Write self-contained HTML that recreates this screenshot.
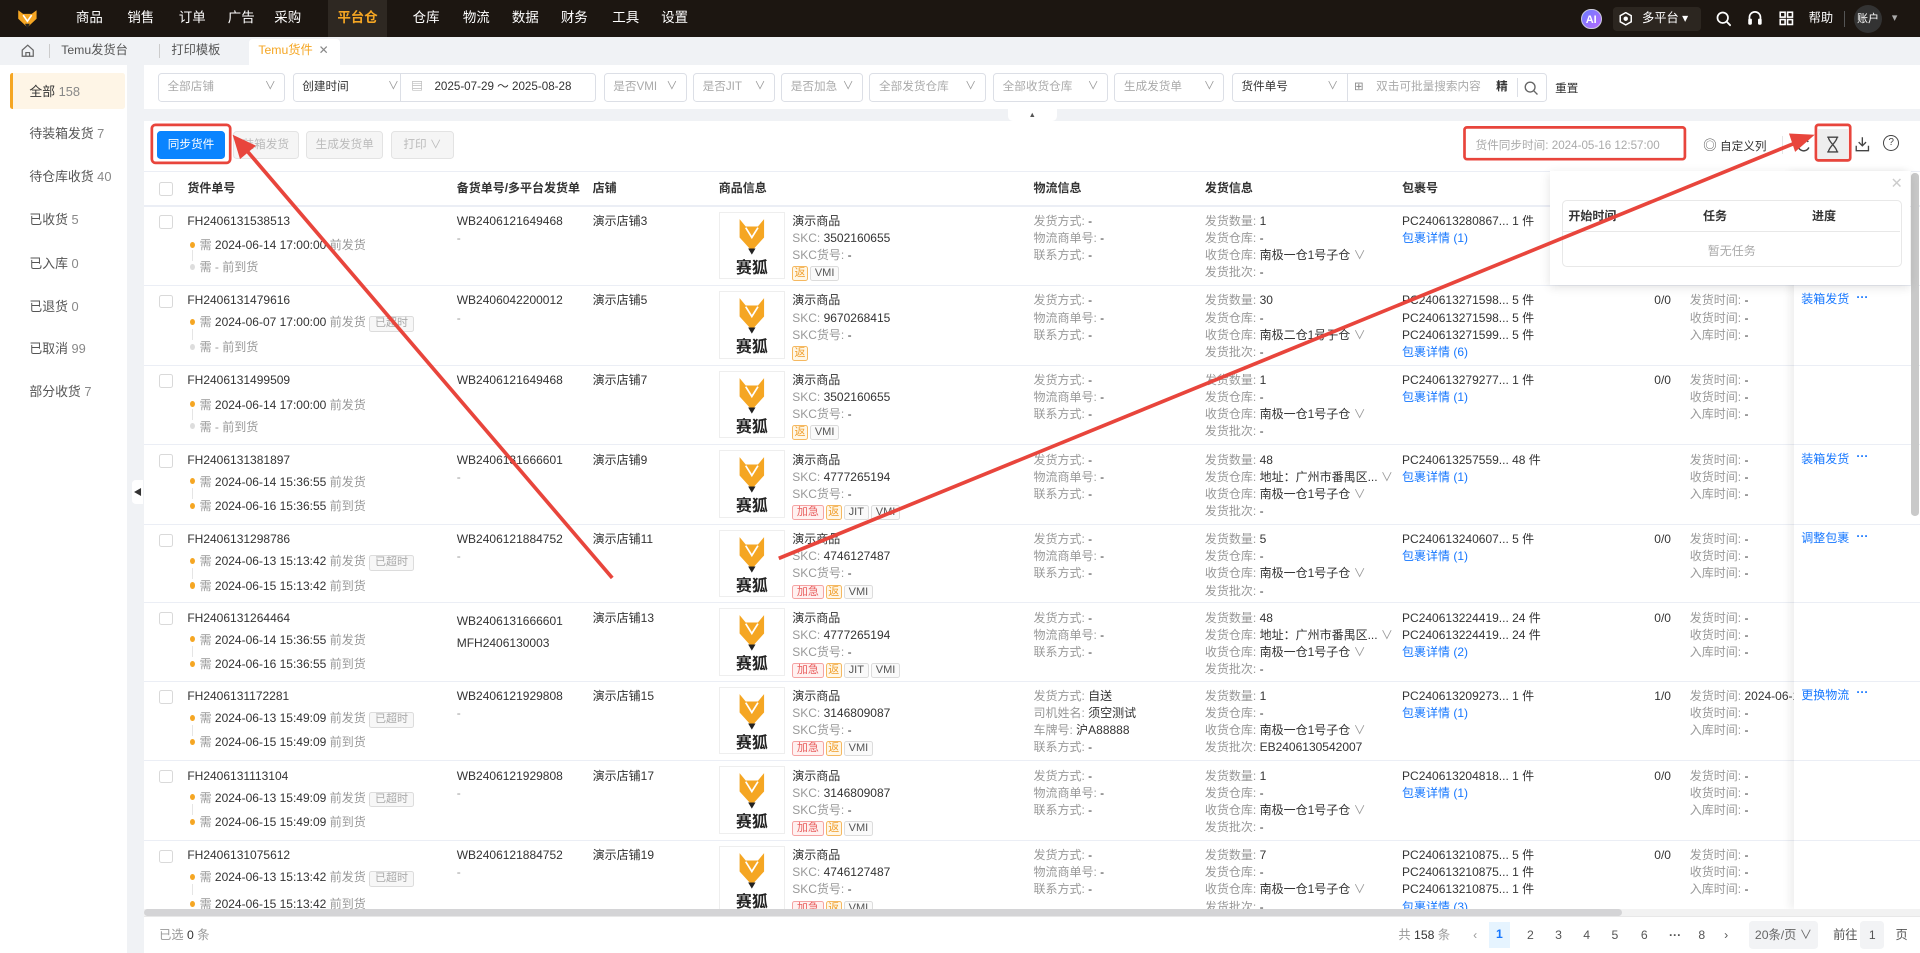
<!DOCTYPE html>
<html><head><meta charset="utf-8"><style>
*{box-sizing:border-box;margin:0;padding:0}
html,body{width:1920px;height:953px;overflow:hidden;background:#f0f2f5}
#w{zoom:1.2245;width:1568px;height:778px;position:relative;font-family:"Liberation Sans","Noto Sans CJK SC",sans-serif;font-size:9.8px;color:#333;line-height:14px}
.a{position:absolute;white-space:nowrap}
.nav{left:0;top:0;width:1568px;height:30px;background:#1c1611}
.nav .m{position:absolute;top:0;height:30px;line-height:30px;color:#fff;font-size:11px}
.tabs{left:0;top:30px;width:1568px;height:23px;background:#f0f2f5}
.side{left:0;top:53px;width:104px;height:725px;background:#fff}
.side .it{position:absolute;left:24px;color:#555;font-size:10.5px}
.side .it b{font-weight:normal;color:#888}
.fp{left:118px;top:53px;width:1450px;height:36px;background:#fff}
.sel{position:absolute;top:7px;height:23px;border:1px solid #dcdfe6;border-radius:3px;background:#fff;color:#aaa;line-height:21px;padding-left:7px;font-size:9.5px}
.sel .ar{position:absolute;right:7px;top:0;color:#999;font-size:9px}
.mp{left:118px;top:99px;width:1450px;height:679px;background:#fff}
.btn{position:absolute;top:8px;height:23px;line-height:21px;border:1px solid #e3e3e3;border-radius:3px;background:#f5f5f5;color:#bbb;text-align:center;font-size:9.5px}
.hd{left:118px;top:140px;width:1450px;height:28px;border-top:1px solid #ebeef5;border-bottom:1px solid #ebeef5;font-weight:bold;font-size:9.8px}
.row{position:absolute;left:118px;width:1450px;height:65px;border-top:1px solid #ebeef5;background:#fff}
.cb{position:absolute;width:11px;height:11px;border:1px solid #d9d9d9;border-radius:2px;background:#fff}
.g{color:#999}
.dot{display:inline-block;width:4px;height:5px;border-radius:50%;background:#f5a623;margin-right:4px;vertical-align:1px}
.dot.n{background:#ddd}
.tg{display:inline-block;height:12px;line-height:10px;border:1px solid #dcdcdc;border-radius:2px;padding:0 3px;font-size:9px;color:#555;margin-right:2px;background:#fafafa}
.tg.o{border-color:#f5b860;color:#f0a030;background:#fff7e6;padding:0 1px}
.tg.r{border-color:#f5a3a3;color:#e86060;background:#fff1f0}
.tg.to{color:#aaa;background:#f7f7f7;height:13px;line-height:11px;padding:0 4px}
.img{position:absolute;left:469px;top:4px;width:54px;height:55px;border:1px solid #eee;background:#fff}
.bl{color:#1677ff}
.fx{position:absolute;left:1465px;top:140px;width:96px;height:602px;background:#fff;box-shadow:-4px 0 6px rgba(0,0,0,.06)}
.pg{position:absolute;top:756px;height:16px;line-height:16px;font-size:10px;color:#555}
</style></head><body><div id="w">

<div class="a nav">
<svg class="a" style="left:14px;top:7px" width="17" height="17" viewBox="0 0 17 17"><polygon points="1,1 5,4 12,4 16,1 16,8 8.5,15 1,8" fill="#f5a623"/><polyline points="5,5 8.5,10 12,5" fill="none" stroke="#fff" stroke-width="1.3"/><polygon points="6.5,12 10.5,12 8.5,16" fill="#222"/></svg>
<div class="m" style="left:62px">商品</div><div class="m" style="left:104px">销售</div><div class="m" style="left:146px">订单</div><div class="m" style="left:186px">广告</div><div class="m" style="left:224px">采购</div>
<div class="m" style="width:48px;text-align:center;background:#2e2822;color:#f5a623;font-weight:bold;left:268px">平台仓</div>
<div class="m" style="left:337px">仓库</div><div class="m" style="left:378px">物流</div><div class="m" style="left:418px">数据</div><div class="m" style="left:458px">财务</div><div class="m" style="left:500px">工具</div><div class="m" style="left:540px">设置</div>
<div class="a" style="left:1291px;top:7px;width:17px;height:17px;border-radius:50%;background:linear-gradient(135deg,#6b7cff,#b86bff);color:#fff;font-size:9px;font-weight:bold;line-height:17px;text-align:center;border:1px solid #ccd">AI</div>
<div class="a" style="left:1317px;top:6px;width:72px;height:19px;background:#2c2620;border-radius:3px;color:#fff;font-size:10px;line-height:19px;padding-left:24px">多平台 ▾</div>
<svg class="a" style="left:1322px;top:10px" width="11" height="11" viewBox="0 0 11 11"><polygon points="5.5,0.5 10,3 10,8 5.5,10.5 1,8 1,3" fill="none" stroke="#fff" stroke-width="1.2"/><circle cx="5.5" cy="5.5" r="1.8" fill="#fff"/></svg>
<svg class="a" style="left:1401px;top:9px" width="13" height="13" viewBox="0 0 13 13"><circle cx="5.5" cy="5.5" r="4.3" fill="none" stroke="#fff" stroke-width="1.4"/><line x1="8.6" y1="8.6" x2="12" y2="12" stroke="#fff" stroke-width="1.5"/></svg>
<svg class="a" style="left:1427px;top:8px" width="13" height="14" viewBox="0 0 13 14"><path d="M2 8 V6 A4.5 4.5 0 0 1 11 6 V8" fill="none" stroke="#fff" stroke-width="1.4"/><rect x="1" y="7" width="3" height="5" rx="1" fill="#fff"/><rect x="9" y="7" width="3" height="5" rx="1" fill="#fff"/></svg>
<svg class="a" style="left:1453px;top:9px" width="12" height="12" viewBox="0 0 12 12" fill="none" stroke="#fff" stroke-width="1.3"><rect x="1" y="1" width="4" height="4"/><rect x="7" y="1" width="4" height="4"/><rect x="1" y="7" width="4" height="4"/><rect x="7" y="7" width="4" height="4"/></svg>
<div class="m" style="left:1477px;font-size:10px">帮助</div>
<div class="a" style="left:1506px;top:9px;width:1px;height:13px;background:#555"></div>
<div class="a" style="left:1514px;top:4px;width:23px;height:23px;border-radius:50%;background:#333;color:#fff;font-size:9px;line-height:23px;text-align:center">账户</div>
<div class="m" style="left:1545px;color:#aaa;font-size:9px">▾</div>
</div>

<div class="a tabs">
<svg class="a" style="left:17px;top:6px" width="11" height="11" viewBox="0 0 11 11"><path d="M1 5 L5.5 1 L10 5 V10 H1 Z M4 10 V7 H7 V10" fill="none" stroke="#666" stroke-width="1"/></svg>
<div class="a" style="left:40px;top:6px;width:1px;height:11px;background:#ccc"></div>
<div class="a" style="left:50px;top:4px;color:#555;font-size:10px">Temu发货台</div>
<div class="a" style="left:130px;top:6px;width:1px;height:11px;background:#ccc"></div>
<div class="a" style="left:140px;top:4px;color:#555;font-size:10px">打印模板</div>
<div class="a" style="left:203px;top:2px;width:75px;height:21px;background:#fff;border-radius:3px 3px 0 0"></div>
<div class="a" style="left:211px;top:4px;color:#f5a623;font-size:10px">Temu货件 <span style="color:#888;margin-left:2px">✕</span></div>
</div>

<div class="a side">
<div class="a" style="left:8px;top:7px;width:94px;height:29px;background:#fef5e6;border-left:3px solid #f5a623;border-radius:2px"></div>
<div class="it" style="top:15px;color:#333">全部 <b>158</b></div>
<div class="it" style="top:49px">待装箱发货 <b>7</b></div>
<div class="it" style="top:84px">待仓库收货 <b>40</b></div>
<div class="it" style="top:119px">已收货 <b>5</b></div>
<div class="it" style="top:155px">已入库 <b>0</b></div>
<div class="it" style="top:190px">已退货 <b>0</b></div>
<div class="it" style="top:225px">已取消 <b>99</b></div>
<div class="it" style="top:260px">部分收货 <b>7</b></div>
</div>
<div class="a" style="left:108px;top:392px;width:9px;height:20px;background:#fff;border-radius:3px 0 0 3px;color:#333;font-size:7px;line-height:20px;text-align:center">◀</div>

<div class="a fp">
<div class="sel" style="left:11px;width:104px">全部店铺<span class="ar">∨</span></div>
<div class="sel" style="left:121px;width:248px;color:#333">创建时间<span class="ar" style="right:auto;left:77px">∨</span><span style="position:absolute;left:87px;top:0;bottom:0;border-left:1px solid #dcdfe6"></span><span style="position:absolute;left:96px;color:#999">▤</span><span style="position:absolute;left:115px;color:#333">2025-07-29 ～ 2025-08-28</span></div>
<div class="sel" style="left:375px;width:68px">是否VMI<span class="ar">∨</span></div>
<div class="sel" style="left:448px;width:67px">是否JIT<span class="ar">∨</span></div>
<div class="sel" style="left:520px;width:67px">是否加急<span class="ar">∨</span></div>
<div class="sel" style="left:592px;width:95px">全部发货仓库<span class="ar">∨</span></div>
<div class="sel" style="left:693px;width:94px">全部收货仓库<span class="ar">∨</span></div>
<div class="sel" style="left:792px;width:90px">生成发货单<span class="ar">∨</span></div>
<div class="sel" style="left:888px;width:257px;color:#333">货件单号<span class="ar" style="right:auto;left:77px">∨</span><span style="position:absolute;left:93px;top:0;bottom:0;border-left:1px solid #dcdfe6"></span><span style="position:absolute;left:99px;color:#888">⊞</span><span style="position:absolute;left:117px;color:#aaa">双击可批量搜索内容</span><span style="position:absolute;left:215px;color:#333;font-weight:bold">精</span><span style="position:absolute;left:232px;top:3px;bottom:3px;border-left:1px solid #dcdfe6"></span><svg style="position:absolute;left:238px;top:5px" width="12" height="12" viewBox="0 0 12 12"><circle cx="5" cy="5" r="4" fill="none" stroke="#666" stroke-width="1.1"/><line x1="8" y1="8" x2="11" y2="11" stroke="#666" stroke-width="1.1"/></svg></div>
<div class="a" style="left:1152px;top:12px;font-size:9.5px">重置</div>
</div>
<div class="a" style="left:823px;top:89px;width:40px;height:10px;background:#fff;border-radius:0 0 4px 4px;text-align:center;font-size:6px;line-height:10px;color:#555">▲</div>

<div class="a mp">
<div class="btn" style="left:10px;width:56px;background:#0a84ff;border-color:#0a84ff;color:#fff">同步货件</div>
<div class="btn" style="left:72px;width:54px">装箱发货</div>
<div class="btn" style="left:132px;width:63px">生成发货单</div>
<div class="btn" style="left:201px;width:52px">打印 ∨</div>
<div class="a" style="left:1087px;top:13px;color:#aaa;font-size:9.5px">货件同步时间: 2024-05-16 12:57:00</div>
<div class="a" style="left:1273px;top:13px;font-size:9.5px"><span style="color:#555;font-size:11px">◎</span> 自定义列</div>
<div class="a" style="left:1337px;top:12px;width:1px;height:15px;background:#e5e5e5"></div>
<svg class="a" style="left:1349px;top:13px" width="12" height="13" viewBox="0 0 12 13"><path d="M10 4 A4.6 4.6 0 1 0 10.5 8.5" fill="none" stroke="#444" stroke-width="1.2"/></svg>
<div class="a" style="left:1367px;top:6px;width:24px;height:27px;background:#eee"></div>
<svg class="a" style="left:1373px;top:12px" width="11" height="14" viewBox="0 0 11 14" fill="none" stroke="#444" stroke-width="1.1"><path d="M1 1 H10 M1 13 H10 M2 1 C2 5 9 9 9 13 M9 1 C9 5 2 9 2 13"/></svg>
<svg class="a" style="left:1397px;top:12px" width="12" height="13" viewBox="0 0 12 13" fill="none" stroke="#444" stroke-width="1.1"><path d="M6 1 V8 M3 5 L6 8 L9 5 M1 8 V12 H11 V8"/></svg>
<div class="a" style="left:1420px;top:11px;width:13px;height:13px;border:1px solid #444;border-radius:50%;font-size:8px;line-height:11px;text-align:center;color:#444">?</div>
</div>

<div class="a hd">
<i class="cb" style="left:12px;top:8px"></i>
<div class="a" style="left:35px;top:6px">货件单号</div>
<div class="a" style="left:255px;top:6px">备货单号/多平台发货单</div>
<div class="a" style="left:366px;top:6px">店铺</div>
<div class="a" style="left:469px;top:6px">商品信息</div>
<div class="a" style="left:726px;top:6px">物流信息</div>
<div class="a" style="left:866px;top:6px">发货信息</div>
<div class="a" style="left:1027px;top:6px">包裹号</div>
</div>

<div class="row" style="top:168px">
<i class="cb" style="left:12px;top:7px"></i>
<div class="a" style="left:35px;top:5px">FH2406131538513</div>
<div class="a" style="left:37px;top:25px"><span class="dot"></span><span class="g">需</span> 2024-06-14 17:00:00 <span class="g">前发货</span></div>
<div class="a" style="left:39px;top:35px;width:1px;height:9px;background:#e5e5e5"></div>
<div class="a" style="left:37px;top:43px"><span class="dot n"></span><span class="g">需 - 前到货</span></div>
<div class="a" style="left:255px;top:5px">WB2406121649468</div><div class="a g" style="left:255px;top:19px">-</div>
<div class="a" style="left:366px;top:5px">演示店铺3</div>
<div class="img"><svg width="52" height="53" viewBox="0 0 52 53"><polygon points="16,5 21,11 31,11 36,5 36,20 26,31 16,20" fill="#f5a623"/><polyline points="21,12 26,20 31,12" fill="none" stroke="#fff" stroke-width="1.4"/><polygon points="23,29 29,29 26,34" fill="#222"/><text x="26" y="49" text-anchor="middle" font-size="13" font-weight="bold" fill="#222">赛狐</text></svg></div>
<div class="a" style="left:529px;top:5px">演示商品</div><div class="a" style="left:529px;top:19px"><span class="g">SKC:</span> 3502160655</div><div class="a" style="left:529px;top:33px"><span class="g">SKC货号:</span> -</div>
<div class="a" style="left:529px;top:47px"><span class="tg o">返</span><span class="tg">VMI</span></div>
<div class="a" style="left:726px;top:5px"><span class="g">发货方式:</span> -<br><span class="g">物流商单号:</span> -<br><span class="g">联系方式:</span> -</div>
<div class="a" style="left:866px;top:5px"><span class="g">发货数量:</span> 1<br><span class="g">发货仓库:</span> -<br><span class="g">收货仓库:</span> 南极一仓1号子仓 <span class="g">∨</span><br><span class="g">发货批次:</span> -</div>
<div class="a" style="left:1027px;top:5px">PC240613280867... 1 件<br><span class="bl">包裹详情 (1)</span></div>
</div>

<div class="row" style="top:233px">
<i class="cb" style="left:12px;top:7px"></i>
<div class="a" style="left:35px;top:5px">FH2406131479616</div>
<div class="a" style="left:37px;top:23px"><span class="dot"></span><span class="g">需</span> 2024-06-07 17:00:00 <span class="g">前发货</span> <span class="tg to">已超时</span></div>
<div class="a" style="left:39px;top:35px;width:1px;height:9px;background:#e5e5e5"></div>
<div class="a" style="left:37px;top:43px"><span class="dot n"></span><span class="g">需 - 前到货</span></div>
<div class="a" style="left:255px;top:5px">WB2406042200012</div><div class="a g" style="left:255px;top:19px">-</div>
<div class="a" style="left:366px;top:5px">演示店铺5</div>
<div class="img"><svg width="52" height="53" viewBox="0 0 52 53"><polygon points="16,5 21,11 31,11 36,5 36,20 26,31 16,20" fill="#f5a623"/><polyline points="21,12 26,20 31,12" fill="none" stroke="#fff" stroke-width="1.4"/><polygon points="23,29 29,29 26,34" fill="#222"/><text x="26" y="49" text-anchor="middle" font-size="13" font-weight="bold" fill="#222">赛狐</text></svg></div>
<div class="a" style="left:529px;top:5px">演示商品</div><div class="a" style="left:529px;top:19px"><span class="g">SKC:</span> 9670268415</div><div class="a" style="left:529px;top:33px"><span class="g">SKC货号:</span> -</div>
<div class="a" style="left:529px;top:47px"><span class="tg o">返</span></div>
<div class="a" style="left:726px;top:5px"><span class="g">发货方式:</span> -<br><span class="g">物流商单号:</span> -<br><span class="g">联系方式:</span> -</div>
<div class="a" style="left:866px;top:5px"><span class="g">发货数量:</span> 30<br><span class="g">发货仓库:</span> -<br><span class="g">收货仓库:</span> 南极二仓1号子仓 <span class="g">∨</span><br><span class="g">发货批次:</span> -</div>
<div class="a" style="left:1027px;top:5px">PC240613271598... 5 件<br>PC240613271598... 5 件<br>PC240613271599... 5 件<br><span class="bl">包裹详情 (6)</span></div>
<div class="a" style="left:1233px;top:5px">0/0</div>
<div class="a" style="left:1262px;top:5px"><span class="g">发货时间:</span> -<br><span class="g">收货时间:</span> -<br><span class="g">入库时间:</span> -</div>
</div>

<div class="row" style="top:298px">
<i class="cb" style="left:12px;top:7px"></i>
<div class="a" style="left:35px;top:5px">FH2406131499509</div>
<div class="a" style="left:37px;top:25px"><span class="dot"></span><span class="g">需</span> 2024-06-14 17:00:00 <span class="g">前发货</span></div>
<div class="a" style="left:39px;top:35px;width:1px;height:9px;background:#e5e5e5"></div>
<div class="a" style="left:37px;top:43px"><span class="dot n"></span><span class="g">需 - 前到货</span></div>
<div class="a" style="left:255px;top:5px">WB2406121649468</div><div class="a g" style="left:255px;top:19px">-</div>
<div class="a" style="left:366px;top:5px">演示店铺7</div>
<div class="img"><svg width="52" height="53" viewBox="0 0 52 53"><polygon points="16,5 21,11 31,11 36,5 36,20 26,31 16,20" fill="#f5a623"/><polyline points="21,12 26,20 31,12" fill="none" stroke="#fff" stroke-width="1.4"/><polygon points="23,29 29,29 26,34" fill="#222"/><text x="26" y="49" text-anchor="middle" font-size="13" font-weight="bold" fill="#222">赛狐</text></svg></div>
<div class="a" style="left:529px;top:5px">演示商品</div><div class="a" style="left:529px;top:19px"><span class="g">SKC:</span> 3502160655</div><div class="a" style="left:529px;top:33px"><span class="g">SKC货号:</span> -</div>
<div class="a" style="left:529px;top:47px"><span class="tg o">返</span><span class="tg">VMI</span></div>
<div class="a" style="left:726px;top:5px"><span class="g">发货方式:</span> -<br><span class="g">物流商单号:</span> -<br><span class="g">联系方式:</span> -</div>
<div class="a" style="left:866px;top:5px"><span class="g">发货数量:</span> 1<br><span class="g">发货仓库:</span> -<br><span class="g">收货仓库:</span> 南极一仓1号子仓 <span class="g">∨</span><br><span class="g">发货批次:</span> -</div>
<div class="a" style="left:1027px;top:5px">PC240613279277... 1 件<br><span class="bl">包裹详情 (1)</span></div>
<div class="a" style="left:1233px;top:5px">0/0</div>
<div class="a" style="left:1262px;top:5px"><span class="g">发货时间:</span> -<br><span class="g">收货时间:</span> -<br><span class="g">入库时间:</span> -</div>
</div>

<div class="row" style="top:363px">
<i class="cb" style="left:12px;top:7px"></i>
<div class="a" style="left:35px;top:5px">FH2406131381897</div>
<div class="a" style="left:37px;top:23px"><span class="dot"></span><span class="g">需</span> 2024-06-14 15:36:55 <span class="g">前发货</span></div>
<div class="a" style="left:39px;top:35px;width:1px;height:9px;background:#e5e5e5"></div>
<div class="a" style="left:37px;top:43px"><span class="dot"></span><span class="g">需</span> 2024-06-16 15:36:55 <span class="g">前到货</span></div>
<div class="a" style="left:255px;top:5px">WB2406131666601</div><div class="a g" style="left:255px;top:19px">-</div>
<div class="a" style="left:366px;top:5px">演示店铺9</div>
<div class="img"><svg width="52" height="53" viewBox="0 0 52 53"><polygon points="16,5 21,11 31,11 36,5 36,20 26,31 16,20" fill="#f5a623"/><polyline points="21,12 26,20 31,12" fill="none" stroke="#fff" stroke-width="1.4"/><polygon points="23,29 29,29 26,34" fill="#222"/><text x="26" y="49" text-anchor="middle" font-size="13" font-weight="bold" fill="#222">赛狐</text></svg></div>
<div class="a" style="left:529px;top:5px">演示商品</div><div class="a" style="left:529px;top:19px"><span class="g">SKC:</span> 4777265194</div><div class="a" style="left:529px;top:33px"><span class="g">SKC货号:</span> -</div>
<div class="a" style="left:529px;top:47px"><span class="tg r">加急</span><span class="tg o">返</span><span class="tg">JIT</span><span class="tg">VMI</span></div>
<div class="a" style="left:726px;top:5px"><span class="g">发货方式:</span> -<br><span class="g">物流商单号:</span> -<br><span class="g">联系方式:</span> -</div>
<div class="a" style="left:866px;top:5px"><span class="g">发货数量:</span> 48<br><span class="g">发货仓库:</span> 地址：广州市番禺区... <span class="g">∨</span><br><span class="g">收货仓库:</span> 南极一仓1号子仓 <span class="g">∨</span><br><span class="g">发货批次:</span> -</div>
<div class="a" style="left:1027px;top:5px">PC240613257559... 48 件<br><span class="bl">包裹详情 (1)</span></div>
<div class="a" style="left:1262px;top:5px"><span class="g">发货时间:</span> -<br><span class="g">收货时间:</span> -<br><span class="g">入库时间:</span> -</div>
</div>

<div class="row" style="top:428px">
<i class="cb" style="left:12px;top:7px"></i>
<div class="a" style="left:35px;top:5px">FH2406131298786</div>
<div class="a" style="left:37px;top:23px"><span class="dot"></span><span class="g">需</span> 2024-06-13 15:13:42 <span class="g">前发货</span> <span class="tg to">已超时</span></div>
<div class="a" style="left:39px;top:35px;width:1px;height:9px;background:#e5e5e5"></div>
<div class="a" style="left:37px;top:43px"><span class="dot"></span><span class="g">需</span> 2024-06-15 15:13:42 <span class="g">前到货</span></div>
<div class="a" style="left:255px;top:5px">WB2406121884752</div><div class="a g" style="left:255px;top:19px">-</div>
<div class="a" style="left:366px;top:5px">演示店铺11</div>
<div class="img"><svg width="52" height="53" viewBox="0 0 52 53"><polygon points="16,5 21,11 31,11 36,5 36,20 26,31 16,20" fill="#f5a623"/><polyline points="21,12 26,20 31,12" fill="none" stroke="#fff" stroke-width="1.4"/><polygon points="23,29 29,29 26,34" fill="#222"/><text x="26" y="49" text-anchor="middle" font-size="13" font-weight="bold" fill="#222">赛狐</text></svg></div>
<div class="a" style="left:529px;top:5px">演示商品</div><div class="a" style="left:529px;top:19px"><span class="g">SKC:</span> 4746127487</div><div class="a" style="left:529px;top:33px"><span class="g">SKC货号:</span> -</div>
<div class="a" style="left:529px;top:47px"><span class="tg r">加急</span><span class="tg o">返</span><span class="tg">VMI</span></div>
<div class="a" style="left:726px;top:5px"><span class="g">发货方式:</span> -<br><span class="g">物流商单号:</span> -<br><span class="g">联系方式:</span> -</div>
<div class="a" style="left:866px;top:5px"><span class="g">发货数量:</span> 5<br><span class="g">发货仓库:</span> -<br><span class="g">收货仓库:</span> 南极一仓1号子仓 <span class="g">∨</span><br><span class="g">发货批次:</span> -</div>
<div class="a" style="left:1027px;top:5px">PC240613240607... 5 件<br><span class="bl">包裹详情 (1)</span></div>
<div class="a" style="left:1233px;top:5px">0/0</div>
<div class="a" style="left:1262px;top:5px"><span class="g">发货时间:</span> -<br><span class="g">收货时间:</span> -<br><span class="g">入库时间:</span> -</div>
</div>

<div class="row" style="top:492px">
<i class="cb" style="left:12px;top:7px"></i>
<div class="a" style="left:35px;top:5px">FH2406131264464</div>
<div class="a" style="left:37px;top:23px"><span class="dot"></span><span class="g">需</span> 2024-06-14 15:36:55 <span class="g">前发货</span></div>
<div class="a" style="left:39px;top:35px;width:1px;height:9px;background:#e5e5e5"></div>
<div class="a" style="left:37px;top:43px"><span class="dot"></span><span class="g">需</span> 2024-06-16 15:36:55 <span class="g">前到货</span></div>
<div class="a" style="left:255px;top:5px;line-height:18px">WB2406131666601<br>MFH2406130003</div>
<div class="a" style="left:366px;top:5px">演示店铺13</div>
<div class="img"><svg width="52" height="53" viewBox="0 0 52 53"><polygon points="16,5 21,11 31,11 36,5 36,20 26,31 16,20" fill="#f5a623"/><polyline points="21,12 26,20 31,12" fill="none" stroke="#fff" stroke-width="1.4"/><polygon points="23,29 29,29 26,34" fill="#222"/><text x="26" y="49" text-anchor="middle" font-size="13" font-weight="bold" fill="#222">赛狐</text></svg></div>
<div class="a" style="left:529px;top:5px">演示商品</div><div class="a" style="left:529px;top:19px"><span class="g">SKC:</span> 4777265194</div><div class="a" style="left:529px;top:33px"><span class="g">SKC货号:</span> -</div>
<div class="a" style="left:529px;top:47px"><span class="tg r">加急</span><span class="tg o">返</span><span class="tg">JIT</span><span class="tg">VMI</span></div>
<div class="a" style="left:726px;top:5px"><span class="g">发货方式:</span> -<br><span class="g">物流商单号:</span> -<br><span class="g">联系方式:</span> -</div>
<div class="a" style="left:866px;top:5px"><span class="g">发货数量:</span> 48<br><span class="g">发货仓库:</span> 地址：广州市番禺区... <span class="g">∨</span><br><span class="g">收货仓库:</span> 南极一仓1号子仓 <span class="g">∨</span><br><span class="g">发货批次:</span> -</div>
<div class="a" style="left:1027px;top:5px">PC240613224419... 24 件<br>PC240613224419... 24 件<br><span class="bl">包裹详情 (2)</span></div>
<div class="a" style="left:1233px;top:5px">0/0</div>
<div class="a" style="left:1262px;top:5px"><span class="g">发货时间:</span> -<br><span class="g">收货时间:</span> -<br><span class="g">入库时间:</span> -</div>
</div>

<div class="row" style="top:556px">
<i class="cb" style="left:12px;top:7px"></i>
<div class="a" style="left:35px;top:5px">FH2406131172281</div>
<div class="a" style="left:37px;top:23px"><span class="dot"></span><span class="g">需</span> 2024-06-13 15:49:09 <span class="g">前发货</span> <span class="tg to">已超时</span></div>
<div class="a" style="left:39px;top:35px;width:1px;height:9px;background:#e5e5e5"></div>
<div class="a" style="left:37px;top:43px"><span class="dot"></span><span class="g">需</span> 2024-06-15 15:49:09 <span class="g">前到货</span></div>
<div class="a" style="left:255px;top:5px">WB2406121929808</div><div class="a g" style="left:255px;top:19px">-</div>
<div class="a" style="left:366px;top:5px">演示店铺15</div>
<div class="img"><svg width="52" height="53" viewBox="0 0 52 53"><polygon points="16,5 21,11 31,11 36,5 36,20 26,31 16,20" fill="#f5a623"/><polyline points="21,12 26,20 31,12" fill="none" stroke="#fff" stroke-width="1.4"/><polygon points="23,29 29,29 26,34" fill="#222"/><text x="26" y="49" text-anchor="middle" font-size="13" font-weight="bold" fill="#222">赛狐</text></svg></div>
<div class="a" style="left:529px;top:5px">演示商品</div><div class="a" style="left:529px;top:19px"><span class="g">SKC:</span> 3146809087</div><div class="a" style="left:529px;top:33px"><span class="g">SKC货号:</span> -</div>
<div class="a" style="left:529px;top:47px"><span class="tg r">加急</span><span class="tg o">返</span><span class="tg">VMI</span></div>
<div class="a" style="left:726px;top:5px"><span class="g">发货方式:</span> 自送<br><span class="g">司机姓名:</span> 须空测试<br><span class="g">车牌号:</span> 沪A88888<br><span class="g">联系方式:</span> -</div>
<div class="a" style="left:866px;top:5px"><span class="g">发货数量:</span> 1<br><span class="g">发货仓库:</span> -<br><span class="g">收货仓库:</span> 南极一仓1号子仓 <span class="g">∨</span><br><span class="g">发货批次:</span> EB2406130542007</div>
<div class="a" style="left:1027px;top:5px">PC240613209273... 1 件<br><span class="bl">包裹详情 (1)</span></div>
<div class="a" style="left:1233px;top:5px">1/0</div>
<div class="a" style="left:1262px;top:5px"><span class="g">发货时间:</span> 2024-06-13<br><span class="g">收货时间:</span> -<br><span class="g">入库时间:</span> -</div>
</div>

<div class="row" style="top:621px">
<i class="cb" style="left:12px;top:7px"></i>
<div class="a" style="left:35px;top:5px">FH2406131113104</div>
<div class="a" style="left:37px;top:23px"><span class="dot"></span><span class="g">需</span> 2024-06-13 15:49:09 <span class="g">前发货</span> <span class="tg to">已超时</span></div>
<div class="a" style="left:39px;top:35px;width:1px;height:9px;background:#e5e5e5"></div>
<div class="a" style="left:37px;top:43px"><span class="dot"></span><span class="g">需</span> 2024-06-15 15:49:09 <span class="g">前到货</span></div>
<div class="a" style="left:255px;top:5px">WB2406121929808</div><div class="a g" style="left:255px;top:19px">-</div>
<div class="a" style="left:366px;top:5px">演示店铺17</div>
<div class="img"><svg width="52" height="53" viewBox="0 0 52 53"><polygon points="16,5 21,11 31,11 36,5 36,20 26,31 16,20" fill="#f5a623"/><polyline points="21,12 26,20 31,12" fill="none" stroke="#fff" stroke-width="1.4"/><polygon points="23,29 29,29 26,34" fill="#222"/><text x="26" y="49" text-anchor="middle" font-size="13" font-weight="bold" fill="#222">赛狐</text></svg></div>
<div class="a" style="left:529px;top:5px">演示商品</div><div class="a" style="left:529px;top:19px"><span class="g">SKC:</span> 3146809087</div><div class="a" style="left:529px;top:33px"><span class="g">SKC货号:</span> -</div>
<div class="a" style="left:529px;top:47px"><span class="tg r">加急</span><span class="tg o">返</span><span class="tg">VMI</span></div>
<div class="a" style="left:726px;top:5px"><span class="g">发货方式:</span> -<br><span class="g">物流商单号:</span> -<br><span class="g">联系方式:</span> -</div>
<div class="a" style="left:866px;top:5px"><span class="g">发货数量:</span> 1<br><span class="g">发货仓库:</span> -<br><span class="g">收货仓库:</span> 南极一仓1号子仓 <span class="g">∨</span><br><span class="g">发货批次:</span> -</div>
<div class="a" style="left:1027px;top:5px">PC240613204818... 1 件<br><span class="bl">包裹详情 (1)</span></div>
<div class="a" style="left:1233px;top:5px">0/0</div>
<div class="a" style="left:1262px;top:5px"><span class="g">发货时间:</span> -<br><span class="g">收货时间:</span> -<br><span class="g">入库时间:</span> -</div>
</div>

<div class="row" style="top:686px;height:56px;overflow:hidden">
<i class="cb" style="left:12px;top:7px"></i>
<div class="a" style="left:35px;top:5px">FH2406131075612</div>
<div class="a" style="left:37px;top:23px"><span class="dot"></span><span class="g">需</span> 2024-06-13 15:13:42 <span class="g">前发货</span> <span class="tg to">已超时</span></div>
<div class="a" style="left:39px;top:35px;width:1px;height:9px;background:#e5e5e5"></div>
<div class="a" style="left:37px;top:45px"><span class="dot"></span><span class="g">需</span> 2024-06-15 15:13:42 <span class="g">前到货</span></div>
<div class="a" style="left:255px;top:5px">WB2406121884752</div><div class="a g" style="left:255px;top:19px">-</div>
<div class="a" style="left:366px;top:5px">演示店铺19</div>
<div class="img"><svg width="52" height="53" viewBox="0 0 52 53"><polygon points="16,5 21,11 31,11 36,5 36,20 26,31 16,20" fill="#f5a623"/><polyline points="21,12 26,20 31,12" fill="none" stroke="#fff" stroke-width="1.4"/><polygon points="23,29 29,29 26,34" fill="#222"/><text x="26" y="49" text-anchor="middle" font-size="13" font-weight="bold" fill="#222">赛狐</text></svg></div>
<div class="a" style="left:529px;top:5px">演示商品</div><div class="a" style="left:529px;top:19px"><span class="g">SKC:</span> 4746127487</div><div class="a" style="left:529px;top:33px"><span class="g">SKC货号:</span> -</div>
<div class="a" style="left:529px;top:47px"><span class="tg r">加急</span><span class="tg o">返</span><span class="tg">VMI</span></div>
<div class="a" style="left:726px;top:5px"><span class="g">发货方式:</span> -<br><span class="g">物流商单号:</span> -<br><span class="g">联系方式:</span> -</div>
<div class="a" style="left:866px;top:5px"><span class="g">发货数量:</span> 7<br><span class="g">发货仓库:</span> -<br><span class="g">收货仓库:</span> 南极一仓1号子仓 <span class="g">∨</span><br><span class="g">发货批次:</span> -</div>
<div class="a" style="left:1027px;top:5px">PC240613210875... 5 件<br>PC240613210875... 1 件<br>PC240613210875... 1 件<br><span class="bl">包裹详情 (3)</span></div>
<div class="a" style="left:1233px;top:5px">0/0</div>
<div class="a" style="left:1262px;top:5px"><span class="g">发货时间:</span> -<br><span class="g">收货时间:</span> -<br><span class="g">入库时间:</span> -</div>
</div>

<div class="fx">
<div class="a bl" style="left:6px;top:98px">装箱发货</div><div class="a bl" style="left:51px;top:96px;font-weight:bold">···</div>
<div class="a bl" style="left:6px;top:228px">装箱发货</div><div class="a bl" style="left:51px;top:226px;font-weight:bold">···</div>
<div class="a bl" style="left:6px;top:293px">调整包裹</div><div class="a bl" style="left:51px;top:291px;font-weight:bold">···</div>
<div class="a bl" style="left:6px;top:421px">更换物流</div><div class="a bl" style="left:51px;top:419px;font-weight:bold">···</div>
<div class="a" style="left:0;top:28px;width:96px;border-top:1px solid #ebeef5"></div>
<div class="a" style="left:0;top:93px;width:96px;border-top:1px solid #ebeef5"></div>
<div class="a" style="left:0;top:158px;width:96px;border-top:1px solid #ebeef5"></div>
<div class="a" style="left:0;top:223px;width:96px;border-top:1px solid #ebeef5"></div>
<div class="a" style="left:0;top:288px;width:96px;border-top:1px solid #ebeef5"></div>
<div class="a" style="left:0;top:352px;width:96px;border-top:1px solid #ebeef5"></div>
<div class="a" style="left:0;top:416px;width:96px;border-top:1px solid #ebeef5"></div>
<div class="a" style="left:0;top:481px;width:96px;border-top:1px solid #ebeef5"></div>
<div class="a" style="left:0;top:546px;width:96px;border-top:1px solid #ebeef5"></div>
</div>
<div class="a" style="left:1561px;top:141px;width:6px;height:280px;background:#c9c9c9;border-radius:3px"></div>

<div class="a" style="left:118px;top:742px;width:1450px;height:7px;background:#f2f2f2"></div>
<div class="a" style="left:118px;top:742px;width:1207px;height:6px;background:#d4d4d6;border-radius:3px"></div>
<div class="a" style="left:118px;top:748px;width:1450px;border-top:1px solid #e8e8e8"></div>
<div class="pg" style="left:130px;color:#999">已选 <span style="color:#333">0</span> 条</div>
<div class="pg" style="left:1142px;color:#999">共 <span style="color:#333">158</span> 条</div>
<div class="pg" style="left:1203px;color:#999">‹</div>
<div class="pg" style="left:1216px;width:17px;height:21px;top:753px;line-height:21px;background:#e6f4ff;color:#1677ff;text-align:center;font-weight:bold">1</div>
<div class="pg" style="left:1247px">2</div><div class="pg" style="left:1270px">3</div><div class="pg" style="left:1293px">4</div><div class="pg" style="left:1316px">5</div><div class="pg" style="left:1340px">6</div><div class="pg" style="left:1363px;font-weight:bold">···</div><div class="pg" style="left:1387px">8</div><div class="pg" style="left:1408px">›</div>
<div class="pg" style="left:1428px;top:752px;height:23px;line-height:23px;width:57px;background:#f2f3f5;border-radius:3px;text-align:center;color:#666">20条/页 ∨</div>
<div class="pg" style="left:1497px">前往</div>
<div class="pg" style="left:1519px;top:752px;height:23px;line-height:23px;width:20px;background:#f2f3f5;border-radius:3px;text-align:center">1</div>
<div class="pg" style="left:1548px">页</div>

<div class="a" style="left:1266px;top:140px;width:294px;height:93px;background:#fff;box-shadow:0 2px 8px rgba(0,0,0,.12)">
<div class="a" style="left:278px;top:4px;color:#ccc;font-size:12px">✕</div>
<div class="a" style="left:10px;top:23px;width:277px;height:55px;border:1px solid #e8e8e8;border-radius:4px">
<div class="a" style="left:0;top:25px;width:275px;border-top:1px solid #e8e8e8"></div>
<div class="a" style="left:4px;top:6px;font-weight:bold">开始时间</div>
<div class="a" style="left:114px;top:6px;font-weight:bold">任务</div>
<div class="a" style="left:203px;top:6px;font-weight:bold">进度</div>
<div class="a" style="left:0;width:275px;text-align:center;top:35px;color:#aaa">暂无任务</div>
</div>
</div>

<svg class="a" style="left:0;top:0" width="1568" height="778" viewBox="0 0 1568 778">
<g fill="none" stroke="#e8453c" stroke-width="2.2">
<rect x="124" y="102" width="64" height="31" rx="3"/>
<rect x="1196" y="104" width="180" height="26" rx="2"/>
<rect x="1483" y="102" width="28" height="29" rx="2"/>
<line x1="500" y1="472" x2="199" y2="120" stroke-width="3"/>
<line x1="636" y1="456" x2="1468" y2="116" stroke-width="3"/>
</g>
<polygon points="190,110 209,119 196,130" fill="#e8453c"/>
<polygon points="1482,110 1466,124 1461,109" fill="#e8453c"/>
</svg>

</div></body></html>
